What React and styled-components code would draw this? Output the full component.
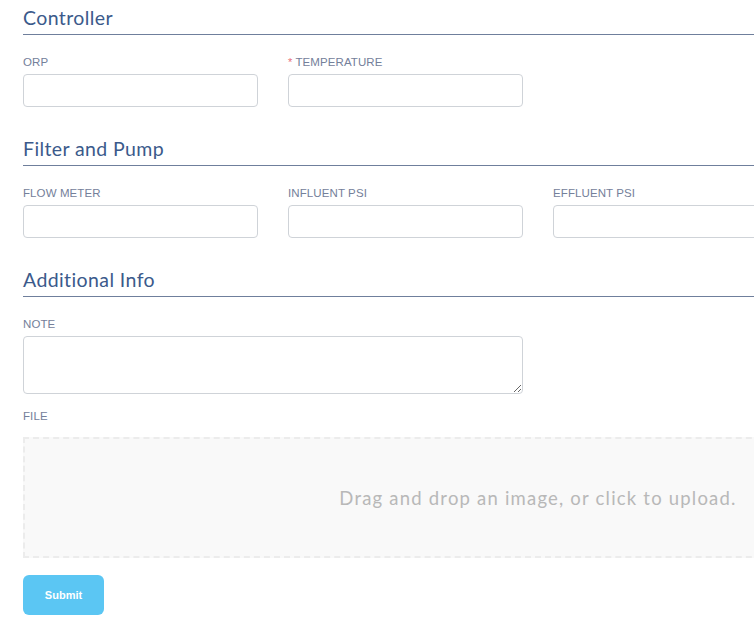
import styled, { createGlobalStyle } from "styled-components";

const GlobalStyle = createGlobalStyle`
    html, body {
        margin: 0;
        padding: 0;
        background: #ffffff;
        overflow: hidden;
    }
    body {
        font-family: "Lato", "Noto Sans", sans-serif;
    }
`;

const sections = [
    {
        title: "Controller",
        fields: [
            { label: "ORP" },
            { label: "TEMPERATURE", required: true }
        ]
    },
    {
        title: "Filter and Pump",
        fields: [
            { label: "FLOW METER" },
            { label: "INFLUENT PSI" },
            { label: "EFFLUENT PSI" }
        ]
    }
];

const App = () => {
    return (
        <Page>
            <GlobalStyle />
            {sections.map((section) => (
                <Section key={section.title}>
                    <SectionTitle>{section.title}</SectionTitle>
                    <FieldRow>
                        {section.fields.map((field) => (
                            <Field key={field.label}>
                                <Label>
                                    {field.required && <Star>*</Star>}
                                    {field.label}
                                </Label>
                                <Input type="text" />
                            </Field>
                        ))}
                    </FieldRow>
                </Section>
            ))}

            <Section>
                <SectionTitle>Additional Info</SectionTitle>
                <Field>
                    <Label>NOTE</Label>
                    <TextArea />
                </Field>
                <Field $wide>
                    <Label $file>FILE</Label>
                    <DropZone>Drag and drop an image, or click to upload.</DropZone>
                </Field>
            </Section>

            <SubmitButton type="button">Submit</SubmitButton>
        </Page>
    );
};

// Estilos
const Page = styled.div`
    width: 1030px;
    padding: 6px 0 0 23px;
`;

const Section = styled.section`
    margin-bottom: 30px;
`;

const SectionTitle = styled.h2`
    margin: 0 0 21px;
    padding-bottom: 5px;
    font-family: "Lato", "Noto Sans", sans-serif;
    font-size: 19.5px;
    font-weight: 400;
    line-height: 23px;
    letter-spacing: 0.4px;
    color: #3b5a8b;
    border-bottom: 1px solid #6f7f9c;
`;

const FieldRow = styled.div`
    display: flex;
    gap: 30px;
`;

const Field = styled.div`
    display: flex;
    flex-direction: column;
    width: ${(props) => (props.$wide ? "100%" : "auto")};
`;

const Label = styled.label`
    display: flex;
    align-items: center;
    gap: 3px;
    height: 12px;
    margin-top: ${(props) => (props.$file ? "16px" : "0")};
    margin-bottom: ${(props) => (props.$file ? "15px" : "6px")};
    font-family: "Liberation Sans", Arial, sans-serif;
    font-size: 11.5px;
    font-weight: 400;
    color: #74809a;
    letter-spacing: 0.1px;
`;

const Star = styled.span`
    color: #e8707a;
    font-size: 11px;
`;

const Input = styled.input`
    box-sizing: border-box;
    width: 235px;
    height: 33px;
    border: 1px solid #cfd3d8;
    border-radius: 4px;
    background: #ffffff;
    outline: none;
`;

const TextArea = styled.textarea`
    box-sizing: border-box;
    width: 500px;
    height: 58px;
    border: 1px solid #cfd3d8;
    border-radius: 4px;
    background: #ffffff;
    outline: none;
    resize: vertical;
    margin: 0;
`;

const DropZone = styled.div`
    box-sizing: border-box;
    display: flex;
    align-items: center;
    justify-content: center;
    height: 121px;
    border: 2px dashed #ececec;
    background: #f9f9f9;
    font-family: "Lato", "Noto Sans", sans-serif;
    font-size: 18.5px;
    letter-spacing: 1.2px;
    color: #b8b8b8;
`;

const SubmitButton = styled.button`
    display: block;
    margin-top: -13px;
    width: 81px;
    height: 40px;
    border: none;
    border-radius: 6px;
    background: #5bc6f3;
    color: #ffffff;
    font-family: "Liberation Sans", Arial, sans-serif;
    font-size: 11px;
    font-weight: 700;
    cursor: pointer;
`;

export default App;
